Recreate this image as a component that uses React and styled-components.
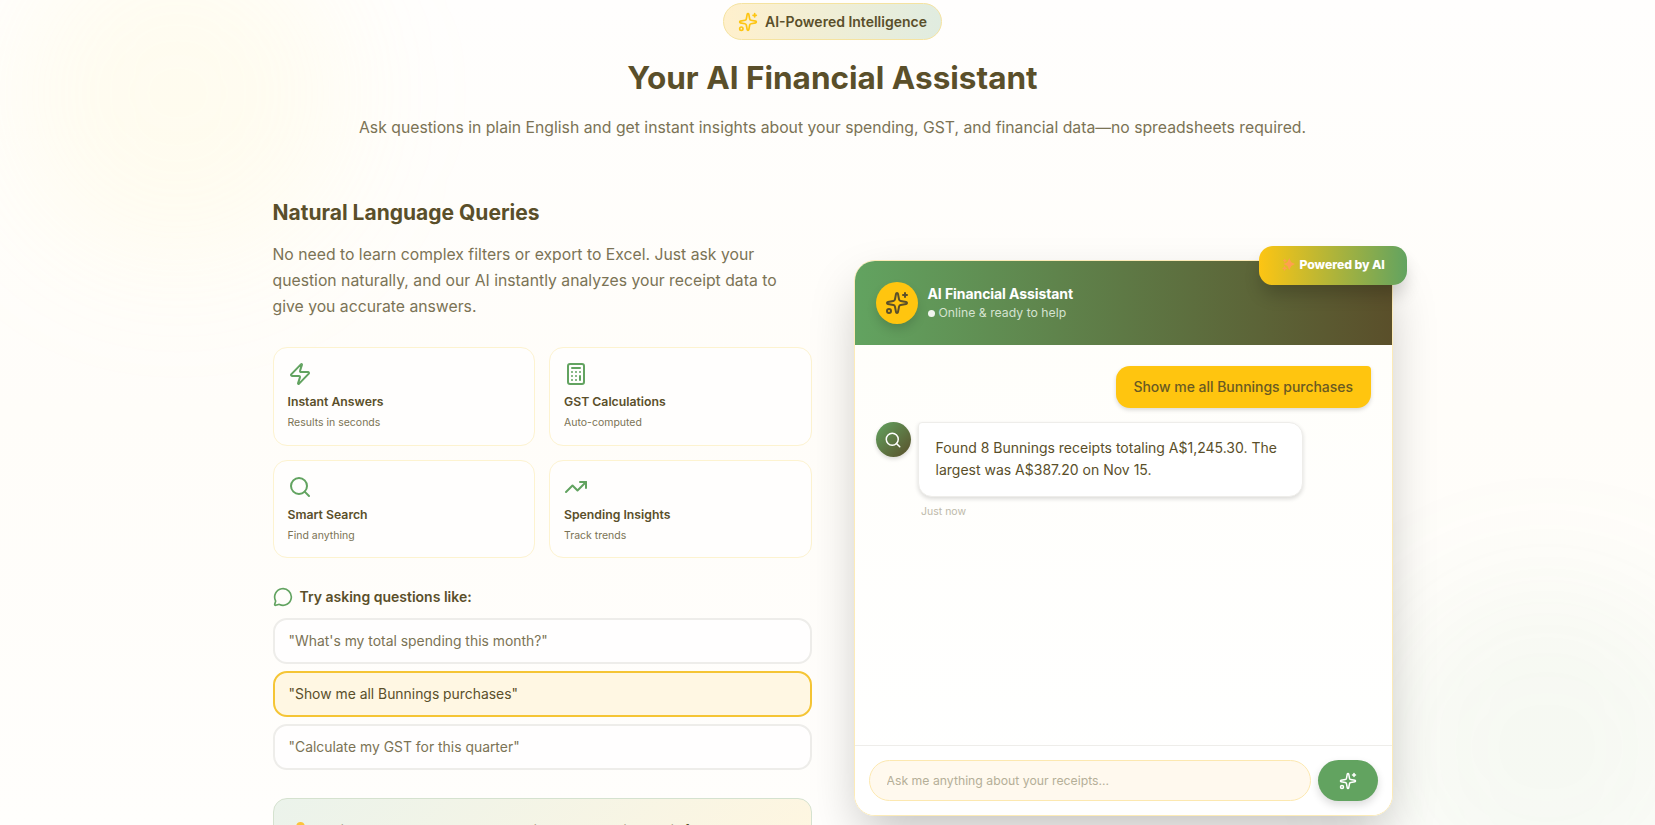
import React, { useState } from "react";
import styled, { createGlobalStyle, css } from "styled-components";
import {
  Calculator,
  MessageCircle,
  Search,
  Sparkles,
  TrendingUp,
  Zap,
} from "lucide-react";

const features = [
  { icon: Zap, title: "Instant Answers", text: "Results in seconds" },
  { icon: Calculator, title: "GST Calculations", text: "Auto-computed" },
  { icon: Search, title: "Smart Search", text: "Find anything" },
  { icon: TrendingUp, title: "Spending Insights", text: "Track trends" },
];

const questions = [
  "What's my total spending this month?",
  "Show me all Bunnings purchases",
  "Calculate my GST for this quarter",
];

export default function App() {
  const [active, setActive] = useState(1);

  return (
    <>
      <GlobalStyle />
      <Section>
        <YellowGlow />
        <GreenGlow />
        <Container>
          <Header>
            <Pill>
              <Sparkles size={20} color="#fdc513" />
              AI-Powered Intelligence
            </Pill>
            <Title>Your AI Financial Assistant</Title>
            <Lead>
              Ask questions in plain English and get instant insights about your
              spending, GST, and financial data—no spreadsheets required.
            </Lead>
          </Header>

          <Columns>
            <Info>
              <SubTitle>Natural Language Queries</SubTitle>
              <Paragraph>
                No need to learn complex filters or export to Excel. Just ask
                your question naturally, and our AI instantly analyzes your
                receipt data to give you accurate answers.
              </Paragraph>
              <FeatureGrid>
                {features.map(({ icon: Icon, title, text }) => (
                  <FeatureCard key={title}>
                    <Icon size={24} />
                    <FeatureTitle>{title}</FeatureTitle>
                    <FeatureText>{text}</FeatureText>
                  </FeatureCard>
                ))}
              </FeatureGrid>
              <QuestionsTitle>
                <MessageCircle size={20} />
                Try asking questions like:
              </QuestionsTitle>
              <QuestionList>
                {questions.map((question, i) => (
                  <Question
                    key={question}
                    $active={i === active}
                    onClick={() => setActive(i)}
                  >
                    "{question}"
                  </Question>
                ))}
              </QuestionList>
              <ProTip>
                <BulbIcon />
                Pro tip: The AI understands context with all your receipt data in
                full
              </ProTip>
            </Info>

            <ChatWrap>
              <Chat>
                <ChatHeader>
                  <BotAvatar>
                    <Sparkles size={24} />
                  </BotAvatar>
                  <div>
                    <BotName>AI Financial Assistant</BotName>
                    <BotStatus>
                      <Dot />
                      Online &amp; ready to help
                    </BotStatus>
                  </div>
                </ChatHeader>
                <Messages>
                  <UserBubble>Show me all Bunnings purchases</UserBubble>
                  <Reply>
                    <ReplyAvatar>
                      <Search size={18} />
                    </ReplyAvatar>
                    <div>
                      <ReplyBubble>
                        Found 8 Bunnings receipts totaling A$1,245.30. The
                        largest was A$387.20 on Nov 15.
                      </ReplyBubble>
                      <Time>Just now</Time>
                    </div>
                  </Reply>
                </Messages>
                <InputBar>
                  <Input placeholder="Ask me anything about your receipts..." />
                  <SendButton>
                    <Sparkles size={18} />
                  </SendButton>
                </InputBar>
              </Chat>
              <PoweredBadge>
                <SparkleEmoji />
                Powered by AI
              </PoweredBadge>
            </ChatWrap>
          </Columns>
        </Container>
      </Section>
    </>
  );
}

function SparkleEmoji() {
  return (
    <svg width="13" height="13" viewBox="0 0 13 13" fill="#ffa04f">
      <path d="M7.300 .3 9.200 4.200 13 6.100 9.200 8 7.300 12 5.400 8 1.500 6.100 5.400 4.200Z" />
      <path d="M2.600 7.800 3.500 9.500 5.200 10.400 3.500 11.300 2.600 13 1.700 11.300 0 10.400 1.700 9.500Z" />
      <path d="M2.800 .5 3.500 1.900 4.900 2.600 3.500 3.300 2.800 4.700 2.100 3.300.7 2.600 2.100 1.900Z" />
    </svg>
  );
}

function BulbIcon() {
  return (
    <Bulb width="13" height="14" viewBox="0 0 13 14">
      <path
        fill="#fcc43c"
        d="M6.500 0a4.300 4.300 0 0 0-2.400 7.900c.5.4.7 1 .7 1.600h3.400c0-.6.2-1.200.7-1.600A4.300 4.300 0 0 0 6.500 0Z"
      />
      <path fill="#8a8a80" d="M4.800 10.200h3.400v2.200l-.8.900H5.600l-.8-.9Z" />
    </Bulb>
  );
}

const GlobalStyle = createGlobalStyle`
  * {
    box-sizing: border-box;
  }

  html {
    font-size: 14px;
  }

  body {
    margin: 0;
    overflow: hidden;
    font-family: Inter, "Liberation Sans", sans-serif;
    color: #5a4f2a;
    background: #fffefa;
  }

  h2, h3, h4, p {
    margin: 0;
  }
`;

const Section = styled.section`
  position: relative;
  height: 825px;
  padding: 3px 0 0 10px;
  overflow: hidden;
  background: linear-gradient(#fffefd, #fffdf9 50%, #fffefc);
`;

const Glow = styled.div`
  position: absolute;
  width: 336px;
  height: 336px;
  border-radius: 50%;
  filter: blur(64px);
`;

const YellowGlow = styled(Glow)`
  top: -75px;
  left: 10px;
  background: rgba(255, 235, 150, 0.12);
`;

const GreenGlow = styled(Glow)`
  right: -60px;
  bottom: -90px;
  background: rgba(98, 163, 96, 0.06);
`;

const Container = styled.div`
  position: relative;
  width: 80rem;
  margin: 0 auto;
`;

const Header = styled.header`
  display: flex;
  flex-direction: column;
  align-items: center;
`;

const Pill = styled.div`
  display: flex;
  align-items: center;
  gap: 7px;
  height: 37px;
  padding: 0 14px;
  border: 1px solid #f5e3a0;
  border-radius: 999px;
  background: linear-gradient(90deg, #fff0cc, #e0ece0);
  font-size: 14px;
  font-weight: 600;
`;

const Title = styled.h2`
  margin-top: 17px;
  font-size: 31.5px;
  font-weight: 700;
  line-height: 42px;
`;

const Lead = styled.p`
  margin-top: 16px;
  font-size: 15.75px;
  line-height: 26px;
  color: #7b7355;
`;

const Columns = styled.div`
  display: grid;
  grid-template-columns: 1fr 1fr;
  gap: 3rem;
  margin-top: 56px;
`;

const Info = styled.div`
  display: flex;
  flex-direction: column;
`;

const SubTitle = styled.h3`
  font-size: 21px;
  font-weight: 700;
  line-height: 32px;
`;

const Paragraph = styled.p`
  margin-top: 13px;
  font-size: 15.75px;
  line-height: 26.1px;
  color: #7b7355;
`;

const FeatureGrid = styled.div`
  display: grid;
  grid-template-columns: 1fr 1fr;
  gap: 14px;
  margin-top: 27px;
`;

const FeatureCard = styled.div`
  height: 98.6px;
  padding: 14px;
  border: 1px solid #fdf3d0;
  border-radius: 14px;
  background: #fffefd;

  svg {
    display: block;
    color: #62a360;
  }
`;

const FeatureTitle = styled.h4`
  margin-top: 7px;
  font-size: 12.25px;
  font-weight: 600;
  line-height: 17.5px;
`;

const FeatureText = styled.p`
  margin-top: 4.5px;
  font-size: 10.5px;
  line-height: 15.75px;
  color: #7b7355;
`;

const QuestionsTitle = styled.h4`
  display: flex;
  align-items: center;
  gap: 7px;
  margin-top: 27.8px;
  font-size: 14px;
  font-weight: 600;
  line-height: 22px;

  svg {
    color: #62a360;
  }
`;

const QuestionList = styled.div`
  display: flex;
  flex-direction: column;
  gap: 7px;
  margin-top: 10px;
`;

const Question = styled.button`
  height: 46px;
  padding: 0 14px 1px;
  border: 2px solid #eeedea;
  border-radius: 14px;
  background: #fffefe;
  font-family: inherit;
  font-size: 13.9px;
  text-align: left;
  color: #7b7355;

  ${(props) =>
    props.$active &&
    css`
      border-color: #f5c535;
      background: #fff7e3;
      color: #5a4f2a;
    `}
`;

const ProTip = styled.div`
  margin-top: 28px;
  padding: 20.5px 20px;
  border: 1px solid #d5e2cf;
  border-radius: 14px;
  background: linear-gradient(135deg, #ebf3eb, #fff6e0);
  font-size: 12.25px;
  font-weight: 500;
  line-height: 20px;
  white-space: nowrap;
`;

const Bulb = styled.svg`
  margin-right: 7px;
  vertical-align: -2px;
`;

const ChatWrap = styled.div`
  position: relative;
  align-self: start;
  margin-top: 63px;
`;

const Chat = styled.div`
  display: flex;
  flex-direction: column;
  height: 556px;
  border: 1px solid #fcebb8;
  border-radius: 21px;
  overflow: hidden;
  background: linear-gradient(#fffefa, #ffffff);
  box-shadow: 0 22px 50px -8px rgba(0, 0, 0, 0.25);
`;

const ChatHeader = styled.div`
  display: flex;
  align-items: center;
  gap: 10px;
  height: 84px;
  padding: 0 21px;
  background: linear-gradient(90deg, #62a360, #5a4f2a);
  color: #fff;
`;

const BotAvatar = styled.div`
  display: flex;
  align-items: center;
  justify-content: center;
  width: 42px;
  height: 42px;
  border-radius: 50%;
  background: #ffc50f;
  color: #5a4f2a;
  box-shadow: 0 6px 12px -2px rgba(0, 0, 0, 0.18);
`;

const BotName = styled.h4`
  font-size: 14px;
  font-weight: 700;
  line-height: 20px;
  letter-spacing: -0.08px;
`;

const BotStatus = styled.p`
  display: flex;
  align-items: center;
  gap: 4px;
  font-size: 12.25px;
  line-height: 18px;
  color: #d5e3d0;
`;

const Dot = styled.span`
  width: 7px;
  height: 7px;
  border-radius: 50%;
  background: #f1f5ef;
`;

const Messages = styled.div`
  display: flex;
  flex-direction: column;
  gap: 14px;
  flex-grow: 1;
  padding: 21px;
`;

const UserBubble = styled.div`
  align-self: flex-end;
  padding: 10px 17.5px;
  border-radius: 14px 4px 14px 14px;
  background: #ffc50f;
  font-size: 14px;
  font-weight: 500;
  line-height: 22px;
  letter-spacing: -0.03px;
  color: #6a5a22;
  box-shadow: 0 2px 4px rgba(0, 0, 0, 0.15);
`;

const Reply = styled.div`
  display: flex;
  gap: 7px;
`;

const ReplyAvatar = styled.div`
  display: flex;
  align-items: center;
  justify-content: center;
  width: 35px;
  height: 35px;
  border-radius: 50%;
  background: linear-gradient(135deg, #62a360, #5a4f2a);
  color: #fff;
  box-shadow: 0 2px 4px rgba(0, 0, 0, 0.15);
`;

const ReplyBubble = styled.div`
  width: 385px;
  padding: 14px 17px;
  border: 1px solid #eeedea;
  border-radius: 4px 14px 14px 14px;
  background: #fff;
  font-size: 14px;
  line-height: 22.4px;
  box-shadow: 0 2px 4px rgba(0, 0, 0, 0.14);
`;

const Time = styled.p`
  margin: 7px 0 0 3.5px;
  font-size: 10.5px;
  line-height: 15px;
  color: #bdb9aa;
`;

const InputBar = styled.div`
  display: flex;
  gap: 7px;
  height: 70px;
  padding: 14px;
  border-top: 1px solid #eeedea;
  background: #fff;
`;

const Input = styled.input`
  flex-grow: 1;
  height: 41px;
  padding: 0 17px 1px;
  border: 1px solid #fce8b0;
  border-radius: 21px;
  background: #fff9ee;
  font-family: inherit;
  font-size: 12.25px;

  &::placeholder {
    color: #b5af98;
  }
`;

const SendButton = styled.button`
  display: flex;
  align-items: center;
  justify-content: center;
  width: 60px;
  height: 41px;
  border: none;
  border-radius: 21px;
  background: #62a360;
  color: #fff;
  box-shadow: 0 4px 8px rgba(0, 0, 0, 0.14);
`;

const PoweredBadge = styled.div`
  position: absolute;
  top: -14px;
  right: -14px;
  display: flex;
  align-items: center;
  gap: 5px;
  width: 148px;
  height: 39px;
  padding: 0 0 2px 23px;
  border-radius: 14px;
  background: linear-gradient(90deg, #fdc513, #62a360);
  font-size: 12.25px;
  font-weight: 800;
  letter-spacing: -0.1px;
  white-space: nowrap;
  color: #fff;
  box-shadow: 0 12px 18px -3px rgba(0, 0, 0, 0.2);
`;
